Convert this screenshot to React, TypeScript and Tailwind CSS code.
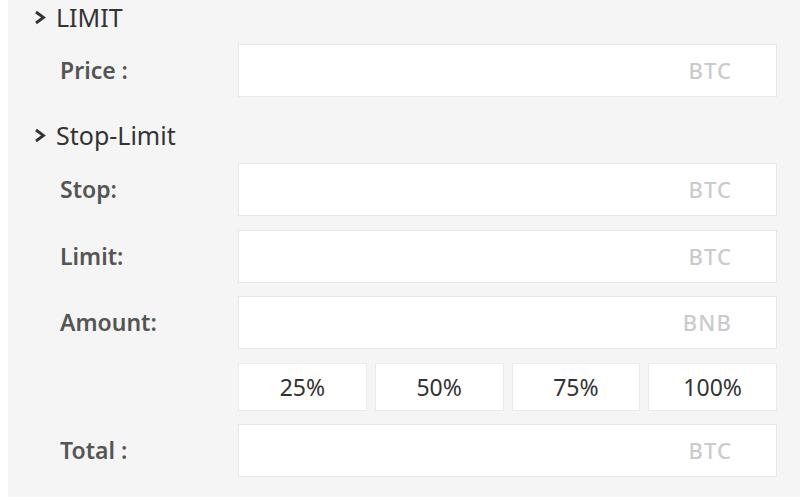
import React from "react";

const Chevron = () => (
  <svg width="12" height="15" viewBox="0 0 12 15" className="shrink-0">
    <polyline points="2,2 9.5,7.5 2,13" fill="none" stroke="#333" strokeWidth="2.8" strokeLinejoin="miter" />
  </svg>
);

const Header = ({ title, className = "" }: { title: string; className?: string }) => (
  <div className={`flex items-center h-8 pl-[26px] gap-[10px] text-[25px] leading-[32px] text-[#333] ${className}`}>
    <Chevron />
    <span>{title}</span>
  </div>
);

const Field = ({ label, unit, className = "" }: { label: string; unit: string; className?: string }) => (
  <div className={`flex items-center ${className}`}>
    <div className="w-[230px] pl-[52px] text-[23px] font-semibold text-[#555]">{label}</div>
    <div className="flex-1 h-[53px] bg-white border border-[#e8e8e8] flex items-center justify-end pr-[44px]">
      <span className="text-[22px] font-medium text-[#cbcbcb] tracking-wider">{unit}</span>
    </div>
  </div>
);

export default function App() {
  const percents = ["25%", "50%", "75%", "100%"];
  return (
    <div className="w-[800px] h-[502px] bg-white" style={{ fontFamily: '"Noto Sans", "Open Sans", sans-serif' }}>
      <div className="ml-[8px] h-[497px] bg-[#f5f5f5] pr-[23px] flex flex-col">
        <Header title="LIMIT" className="mt-[1px]" />
        <Field label="Price :" unit="BTC" className="mt-[11px]" />
        <Header title="Stop-Limit" className="mt-[22px]" />
        <Field label="Stop:" unit="BTC" className="mt-[12px]" />
        <Field label="Limit:" unit="BTC" className="mt-[14px]" />
        <Field label="Amount:" unit="BNB" className="mt-[13px]" />
        <div className="flex mt-[14px]">
          <div className="w-[230px]" />
          <div className="flex-1 grid grid-cols-4 gap-2">
            {percents.map((p) => (
              <div key={p} className="h-[48px] bg-white border border-[#ebebeb] flex items-center justify-center text-[23px] text-[#333]">
                {p}
              </div>
            ))}
          </div>
        </div>
        <Field label="Total :" unit="BTC" className="mt-[13px]" />
      </div>
    </div>
  );
}
